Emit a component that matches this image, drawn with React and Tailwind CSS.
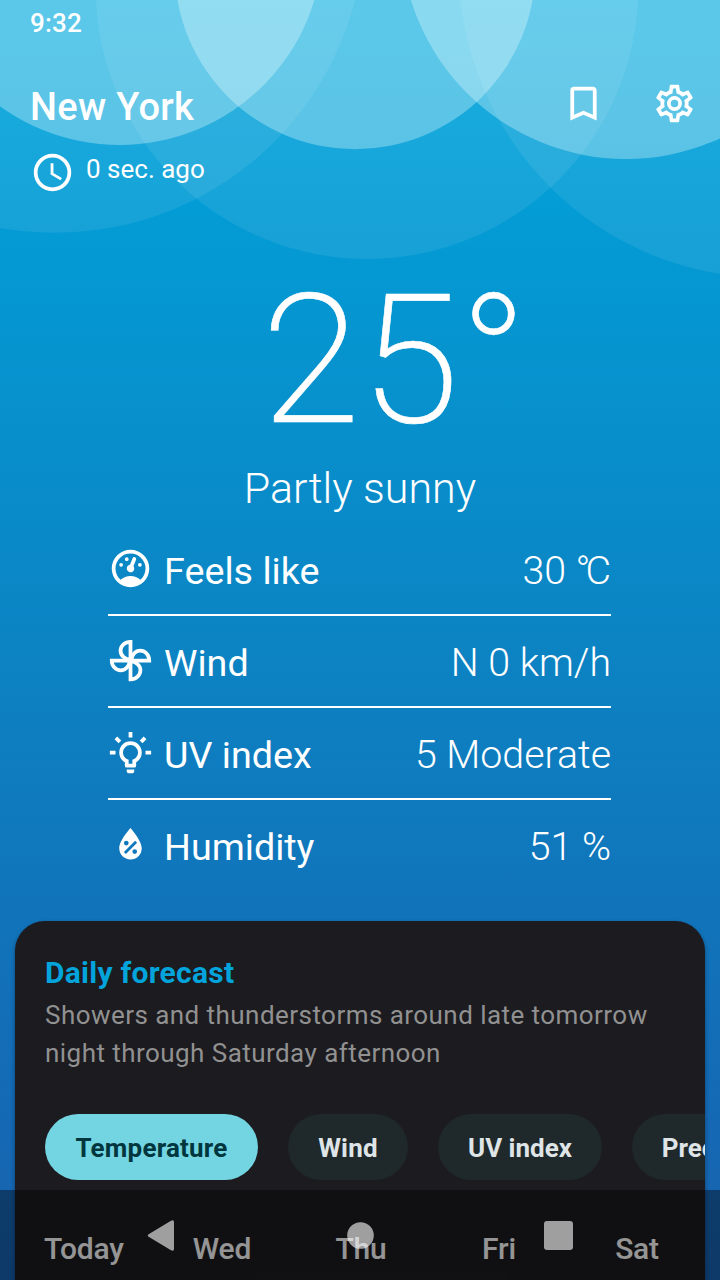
const GAUGE = "M12,2A10,10 0 0,0 2,12A10,10 0 0,0 12,22A10,10 0 0,0 22,12A10,10 0 0,0 12,2M12,4A8,8 0 0,1 20,12C20,14.4 19,16.5 17.3,18C15.9,16.7 14,16 12,16C10,16 8.2,16.7 6.7,18C5,16.5 4,14.4 4,12A8,8 0 0,1 12,4M14,5.89C13.62,5.9 13.26,6.15 13.1,6.54L11.81,9.77L11.71,10C11,10.13 10.41,10.6 10.14,11.26C9.73,12.29 10.23,13.45 11.26,13.86C12.29,14.27 13.45,13.77 13.86,12.74C14.12,12.08 14,11.32 13.57,10.76L13.67,10.5L14.96,7.29L14.97,7.26C15.17,6.75 14.92,6.17 14.41,5.96C14.28,5.91 14.15,5.89 14,5.89M10,6A1,1 0 0,0 9,7A1,1 0 0,0 10,8A1,1 0 0,0 11,7A1,1 0 0,0 10,6M7,9A1,1 0 0,0 6,10A1,1 0 0,0 7,11A1,1 0 0,0 8,10A1,1 0 0,0 7,9M17,9A1,1 0 0,0 16,10A1,1 0 0,0 17,11A1,1 0 0,0 18,10A1,1 0 0,0 17,9Z";
const CLOCK = "M12,20A8,8 0 0,0 20,12A8,8 0 0,0 12,4A8,8 0 0,0 4,12A8,8 0 0,0 12,20M12,2A10,10 0 0,1 22,12A10,10 0 0,1 12,22C6.47,22 2,17.5 2,12A10,10 0 0,1 12,2M12.5,7V12.25L17,14.92L16.25,16.15L11,13V7H12.5Z";
const COG = "M12,8A4,4 0 0,1 16,12A4,4 0 0,1 12,16A4,4 0 0,1 8,12A4,4 0 0,1 12,8M12,10A2,2 0 0,0 10,12A2,2 0 0,0 12,14A2,2 0 0,0 14,12A2,2 0 0,0 12,10M10,22C9.75,22 9.54,21.82 9.5,21.58L9.13,18.93C8.5,18.68 7.96,18.34 7.44,17.94L4.95,18.95C4.73,19.03 4.46,18.95 4.34,18.73L2.34,15.27C2.21,15.05 2.27,14.78 2.46,14.63L4.57,12.97L4.5,12L4.57,11L2.46,9.37C2.27,9.22 2.21,8.95 2.34,8.73L4.34,5.27C4.46,5.05 4.73,4.96 4.95,5.05L7.44,6.05C7.96,5.66 8.5,5.32 9.13,5.07L9.5,2.42C9.54,2.18 9.75,2 10,2H14C14.25,2 14.46,2.18 14.5,2.42L14.87,5.07C15.5,5.32 16.04,5.66 16.56,6.05L19.05,5.05C19.27,4.96 19.54,5.05 19.66,5.27L21.66,8.73C21.79,8.95 21.73,9.22 21.54,9.37L19.43,11L19.5,12L19.43,13L21.54,14.63C21.73,14.78 21.79,15.05 21.66,15.27L19.66,18.73C19.54,18.95 19.27,19.04 19.05,18.95L16.56,17.95C16.04,18.34 15.5,18.68 14.87,18.93L14.5,21.58C14.46,21.82 14.25,22 14,22H10M11.25,4L10.88,6.61C9.68,6.86 8.62,7.5 7.85,8.39L5.44,7.35L4.69,8.65L6.8,10.2C6.4,11.37 6.4,12.64 6.8,13.8L4.68,15.36L5.43,16.66L7.86,15.62C8.63,16.5 9.68,17.14 10.87,17.38L11.24,20H12.76L13.13,17.39C14.32,17.14 15.37,16.5 16.14,15.62L18.57,16.66L19.32,15.36L17.2,13.81C17.6,12.64 17.6,11.37 17.2,10.2L19.31,8.65L18.56,7.35L16.15,8.39C15.38,7.5 14.32,6.86 13.12,6.62L12.75,4H11.25Z";
const BOOKMARK = "M17,18L12,15.82L7,18V5H17M17,3H7A2,2 0 0,0 5,5V21L12,18L19,21V5C19,3.89 18.1,3 17,3Z";
const DROP = "M12,3.25C12,3.25 6,10 6,14C6,17.32 8.69,20 12,20A6,6 0 0,0 18,14C18,10 12,3.25 12,3.25M14.47,9.97L15.53,11.03L9.53,17.03L8.47,15.97M9.75,10A1.25,1.25 0 0,1 11,11.25A1.25,1.25 0 0,1 9.75,12.5A1.25,1.25 0 0,1 8.5,11.25A1.25,1.25 0 0,1 9.75,10M14.25,14.5A1.25,1.25 0 0,1 15.5,15.75A1.25,1.25 0 0,1 14.25,17A1.25,1.25 0 0,1 13,15.75A1.25,1.25 0 0,1 14.25,14.5Z";
const BULB = "M12,6A6,6 0 0,1 18,12C18,14.22 16.79,16.16 15,17.2V19A1,1 0 0,1 14,20H10A1,1 0 0,1 9,19V17.2C7.21,16.16 6,14.22 6,12A6,6 0 0,1 12,6M14,21V22A1,1 0 0,1 13,23H11A1,1 0 0,1 10,22V21H14M20,11H23V13H20V11M1,11H4V13H1V11M13,1V4H11V1H13M4.92,3.5L7.05,5.64L5.63,7.05L3.5,4.93L4.92,3.5M16.95,5.63L19.07,3.5L20.5,4.93L18.37,7.05L16.95,5.63M12,8A4,4 0 0,0 8,12C8,13.86 9.27,15.43 11,15.87V18H13V15.87C14.73,15.43 16,13.86 16,12A4,4 0 0,0 12,8Z";

function Icon({ d, className = "size-[45px]" }) {
  return (
    <svg viewBox="0 0 24 24" className={className} fill="currentColor" fillRule="evenodd">
      <path d={d} />
    </svg>
  );
}

function Fan() {
  return (
    <svg viewBox="0 0 24 24" className="size-[45px]" fill="none" stroke="currentColor" strokeWidth="2">
      {[0, 90, 180, 270].map((a) => (
        <path key={a} transform={`rotate(${a} 12 12)`} d="M12 12V2C9 2 6.700 4.200 6.700 6.800S9 11.400 12 11.600" />
      ))}
    </svg>
  );
}

const stats = [
  {
    icon: <Icon d={GAUGE} />,
    label: "Feels like",
    value: (
      <>
        30 <span className="tracking-[-5px]">°</span>C
      </>
    ),
  },
  { icon: <Fan />, label: "Wind", value: "N 0 km/h" },
  { icon: <Icon d={BULB} />, label: "UV index", value: "5 Moderate" },
  { icon: <Icon d={DROP} />, label: "Humidity", value: "51 %" },
];

const chips = [
  { label: "Temperature", className: "w-[213px] bg-[#74d5e2] text-[#00363d] tracking-[0.2px]" },
  { label: "Wind", className: "w-[120px] bg-[#1f282b] text-[#dfe4e6] tracking-[0.2px]" },
  { label: "UV index", className: "w-[164px] bg-[#1f282b] text-[#dfe4e6]" },
  { label: "Precipitation", className: "w-[209px] bg-[#1f282b] text-[#dfe4e6]" },
];

const days = [
  { label: "Today", className: "w-[78px]" },
  { label: "Wed", className: "w-[200px]" },
  { label: "Thu", className: "w-[78px]" },
  { label: "Fri", className: "w-[198px]" },
  { label: "Sat", className: "w-[78px]" },
];

export default function App() {
  return (
    <div className="relative flex h-[1280px] w-[720px] flex-col overflow-hidden bg-[linear-gradient(180deg,#04a9df_0%,#0499d3_20%,#0b86c5_47%,#1174ba_71%,#1861af_100%)] font-['Roboto',sans-serif] text-white">
      <svg className="absolute inset-0" width="720" height="300" fill="white">
        <g fillOpacity=".08">
          <circle cx="55" cy="-77" r="309.8" />
          <circle cx="367" cy="-12.3" r="271.3" />
          <circle cx="770" cy="-33.2" r="311.3" />
        </g>
        <g fill="#ecffff" fillOpacity=".32">
          <circle cx="119.5" cy="-58.5" r="203.5" />
          <circle cx="355" cy="-31" r="180.2" />
          <circle cx="626" cy="-66" r="225" />
        </g>
      </svg>

      <div className="relative h-[46px] pl-[30px] text-[26px] leading-[46px] font-medium tracking-[0.2px]">9:32</div>
      <header className="relative flex h-[99px] items-center pt-4 pr-[23px] pl-[30px]">
        <h1 className="flex-1 pt-2 text-[38px] font-medium tracking-[0.3px]">New York</h1>
        <Icon d={BOOKMARK} />
        <Icon d={COG} className="ml-[46px] size-[45px]" />
      </header>
      <div className="relative flex h-[55px] items-center pl-[30px]">
        <Icon d={CLOCK} />
        <span className="-mt-[6px] ml-[11px] text-[26px]">0 sec. ago</span>
      </div>

      <div className="mt-[43px] h-[211px] pl-[69px] text-center text-[180px] leading-[236px] font-extralight [-webkit-text-stroke:0.6px_white]">25°</div>
      <div className="h-[70px] text-center text-[43px] leading-[68px] font-light">Partly sunny</div>

      <ul className="mx-[108px] w-[503px]">
        {stats.map((s, i) => (
          <li key={s.label} className={i < 3 ? "flex h-[92px] items-center border-b-2 border-white" : "flex h-[92px] items-center border-b-2 border-transparent"}>
            <span className="-mt-px">{s.icon}</span>
            <span className="ml-[11px] flex-1 pt-1 text-[37.700px]">{s.label}</span>
            <span className="pt-[5px] text-[39.300px] font-light">{s.value}</span>
          </li>
        ))}
      </ul>

      <section className="absolute top-[921px] left-[15px] h-[400px] w-[690px] overflow-hidden rounded-[30px] bg-[#1c1b1f] pt-[30px] pl-[30px] shadow-[0_2px_4px_rgba(0,0,0,0.4)]">
        <h2 className="h-[45px] text-[30px] leading-[44px] font-bold tracking-[0.25px] text-[#03a4dc]">Daily forecast</h2>
        <p className="w-[640px] text-[26px] leading-[38px] tracking-[0.45px] text-[#919191]">
          Showers and thunderstorms around late tomorrow night through Saturday afternoon
        </p>
        <div className="mt-[42px] flex gap-[30px]">
          {chips.map((c) => (
            <div key={c.label} className={`flex h-[66px] shrink-0 items-center justify-center rounded-full text-[26px] font-bold ${c.className}`}>
              <span className="mt-0.5">{c.label}</span>
            </div>
          ))}
        </div>
        <div className="-ml-px mt-[49px] flex text-[30px] leading-[40px] font-medium tracking-[-0.2px] text-[#f8f8f8]">
          {days.map((d) => (
            <div key={d.label} className={`text-center ${d.className}`}>{d.label}</div>
          ))}
        </div>
      </section>

      <nav className="absolute inset-x-0 bottom-0 h-[90px] bg-black/40">
        <svg width="720" height="90" fill="white" fillOpacity=".6">
          <path d="M149 44 171 30.800Q174 29.500 174 32V59Q174 61.500 171 60.200L149 47Q146.500 45.500 149 44Z" />
          <circle cx="360.500" cy="45.500" r="13.300" />
          <rect x="544" y="31" width="29" height="29" rx="3" />
        </svg>
      </nav>
    </div>
  );
}
